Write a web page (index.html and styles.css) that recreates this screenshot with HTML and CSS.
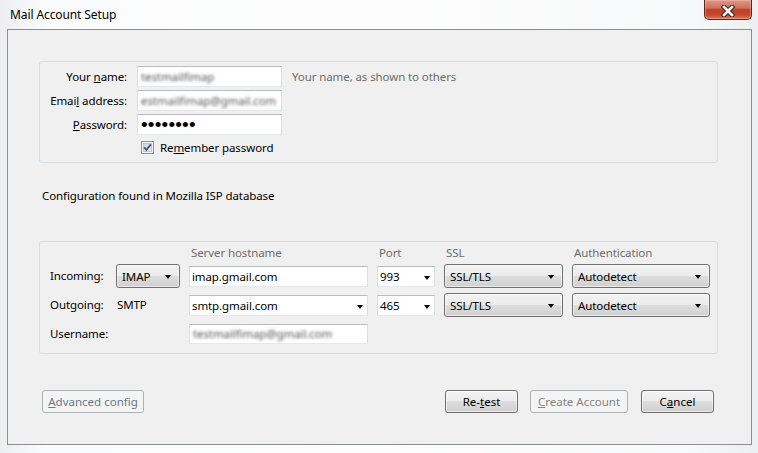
FILE: index.html
```html
<!DOCTYPE html>
<html lang="en">
<head>
  <meta charset="UTF-8" />
  <title>Mail Account Setup</title>
  <link rel="stylesheet" href="styles.css">
</head>
<body>
<div class="window">

  <div class="titlebar">
    <span class="title">Mail Account Setup</span>
    <div class="close">
      <svg width="14" height="12" viewBox="0 0 14 12">
        <path d="M3 2 L11 10 M11 2 L3 10" stroke="#3b2520" stroke-width="4.6" stroke-linecap="square"/>
        <path d="M3 2 L11 10 M11 2 L3 10" stroke="#fff" stroke-width="2.6" stroke-linecap="square"/>
      </svg>
    </div>
  </div>

  <div class="client">

    <div class="group identity">
      <div class="id-grid">
        <label>Your <u>n</u>ame:</label>
        <div class="textbox"><span class="blur">testmailfimap</span></div>
        <span class="hint">Your name, as shown to others</span>

        <label>Emai<u>l</u> address:</label>
        <div class="textbox"><span class="blur">estmailfimap@gmail.com</span></div>
        <span></span>

        <label><u>P</u>assword:</label>
        <div class="textbox"><span class="dots">••••••••</span></div>
        <span></span>
      </div>
      <div class="remember">
        <svg class="checkbox" width="13" height="13" viewBox="0 0 13 13">
          <defs>
            <linearGradient id="cb" x1="0" y1="0" x2="1" y2="1">
              <stop offset="0" stop-color="#cbcfd5"/>
              <stop offset="1" stop-color="#f7f7f7"/>
            </linearGradient>
          </defs>
          <rect x="0.5" y="0.5" width="12" height="12" fill="#f4f4f4" stroke="#8e8f8f"/>
          <rect x="2.5" y="2.5" width="8" height="8" fill="url(#cb)" stroke="#c2c5ca"/>
          <path d="M3.2 6.3 L5.4 8.8 L9.9 3.4" fill="none" stroke="#3f5488" stroke-width="1.8"/>
        </svg>
        <span>Re<u>m</u>ember password</span>
      </div>
    </div>

    <p class="status">Configuration found in Mozilla ISP database</p>

    <div class="group server">
      <span></span>
      <span></span>
      <span class="col-head">Server hostname</span>
      <span class="col-head">Port</span>
      <span class="col-head">SSL</span>
      <span class="col-head">Authentication</span>

      <span class="row-label">Incoming:</span>
      <div class="select"><span>IMAP</span><span class="arrow"></span></div>
      <div class="textbox field">imap.gmail.com</div>
      <div class="textbox field combo"><span>993</span><span class="arrow"></span></div>
      <div class="select"><span>SSL/TLS</span><span class="arrow"></span></div>
      <div class="select"><span>Autodetect</span><span class="arrow"></span></div>

      <span class="row-label">Outgoing:</span>
      <span class="smtp">SMTP</span>
      <div class="textbox field combo"><span>smtp.gmail.com</span><span class="arrow"></span></div>
      <div class="textbox field combo"><span>465</span><span class="arrow"></span></div>
      <div class="select"><span>SSL/TLS</span><span class="arrow"></span></div>
      <div class="select"><span>Autodetect</span><span class="arrow"></span></div>

      <span class="row-label short">Username:</span>
      <span></span>
      <div class="textbox user"><span class="blur">testmailfimap@gmail.com</span></div>
    </div>

    <div class="buttons">
      <button class="btn disabled advanced"><u>A</u>dvanced config</button>
      <button class="btn retest">Re-<u>t</u>est</button>
      <button class="btn disabled create"><u>C</u>reate Account</button>
      <button class="btn cancel">C<u>a</u>ncel</button>
    </div>

  </div>
</div>
</body>
</html>
```

FILE: styles.css
```css
body {
  margin: 0;
  font-family: "Noto Sans", sans-serif;
  font-size: 11.5px;
  letter-spacing: -0.1px;
  color: #000;
  background: #f6f7f8;
}
.window {
  width: 758px;
  height: 453px;
  overflow: hidden;
  background: linear-gradient(to right, #eceef0 0, #fafbfc 6%, #fdfdfd 50%, #f7f8f9 92%, #eceef0 100%);
}

/* title bar */
.titlebar {
  height: 29px;
  display: flex;
  justify-content: space-between;
  align-items: flex-start;
}
.title {
  padding: 7px 0 0 10px;
  font-size: 12px;
  line-height: 16px;
}
.close {
  width: 48px;
  height: 20px;
  margin-right: 6px;
  box-sizing: border-box;
  border: 1px solid #5e2418;
  border-top: none;
  border-radius: 0 0 5px 5px;
  background: linear-gradient(#dc9a8a 0%, #d0725c 40%, #bf3e25 52%, #c44a2f 78%, #da7a5c 100%);
  box-shadow: inset 0 0 0 1px rgba(255, 200, 190, 0.4);
  display: flex;
  justify-content: center;
  padding-top: 5px;
}

/* client area */
.client {
  margin: 0 6px 0 7px;
  height: 416px;
  box-sizing: border-box;
  border: 1px solid #8c9096;
  background: #f0f0f0;
  padding-top: 31px;
}
.group {
  margin-left: 31px;
  width: 679px;
  box-sizing: border-box;
  border: 1px solid #d5dfe5;
  border-radius: 3px;
}

.identity {
  padding: 4px 0 8px;
}
.id-grid {
  display: grid;
  grid-template-columns: 87px 145px auto;
  grid-auto-rows: 21px;
  column-gap: 10px;
  row-gap: 3px;
  align-items: center;
}
.id-grid label {
  text-align: right;
}
.hint {
  color: #6d6d6d;
}
.textbox {
  height: 21px;
  box-sizing: border-box;
  border: 1px solid;
  border-color: #b9bdc3 #dbdfe6 #e3e9ef #dbdfe6;
  background: #fff;
  padding: 0 3px;
  line-height: 19px;
  white-space: nowrap;
  overflow: hidden;
}
/* values are smudged out in the screenshot */
.blur {
  color: transparent;
  text-shadow: 0 0 3px rgba(70, 70, 70, 0.9);
}
.dots {
  font-family: "Liberation Sans", sans-serif;
  font-size: 19px;
  line-height: 19px;
  letter-spacing: 0.2px;
}
.remember {
  display: flex;
  align-items: center;
  gap: 6px;
  height: 13px;
  margin-top: 6px;
  padding-left: 101px;
}
.checkbox {
  flex: none;
}

.status {
  margin: 25px 0 37px 34px;
  line-height: 16px;
}

/* server settings */
.server {
  padding: 3px 0 9px;
  display: grid;
  grid-template-columns: 67px 64px 179px 58px 119px 138px;
  grid-template-rows: 19px 29px 31px 20px;
  column-gap: 9px;
  align-items: start;
}
.col-head {
  color: #6d6d6d;
  line-height: 16px;
  padding-left: 2px;
}
.row-label {
  padding-left: 10px;
  line-height: 24px;
}
.row-label.short {
  line-height: 20px;
}
.smtp {
  padding-left: 1px;
  line-height: 24px;
}
.select {
  height: 24px;
  box-sizing: border-box;
  border: 1px solid #707070;
  border-radius: 3px;
  background: linear-gradient(#f3f3f3 0%, #ebebeb 50%, #dddddd 50%, #d0d0d0 100%);
  box-shadow: inset 0 0 0 1px rgba(255, 255, 255, 0.55);
  display: flex;
  align-items: center;
  justify-content: space-between;
  padding: 0 8px 0 5px;
}
.arrow {
  width: 0;
  height: 0;
  border-left: 3.5px solid transparent;
  border-right: 3.5px solid transparent;
  border-top: 4px solid #000;
  margin-top: 2px;
}
.field {
  margin-top: 2px;
  padding: 0 2px;
}
.combo {
  display: flex;
  align-items: center;
  justify-content: space-between;
  padding-right: 4px;
}
.user {
  height: 20px;
  line-height: 18px;
}

/* buttons */
.buttons {
  display: flex;
  margin: 36px 37px 0 34px;
}
.btn {
  height: 23px;
  box-sizing: border-box;
  border: 1px solid #707070;
  border-radius: 3px;
  background: linear-gradient(#f3f3f3 0%, #ebebeb 50%, #dddddd 50%, #d0d0d0 100%);
  box-shadow: inset 0 0 0 1px rgba(255, 255, 255, 0.55);
  font: inherit;
  color: #000;
  padding: 0;
}
.btn.disabled {
  border-color: #adb2b5;
  background: #f4f4f4;
  box-shadow: none;
  color: #838383;
}
.btn.advanced {
  width: 102px;
  color: #6a7788;
}
.retest {
  width: 73px;
  margin-left: auto;
}
.create {
  width: 98px;
  margin-left: 12px;
}
.cancel {
  width: 73px;
  margin-left: 13px;
}
```
